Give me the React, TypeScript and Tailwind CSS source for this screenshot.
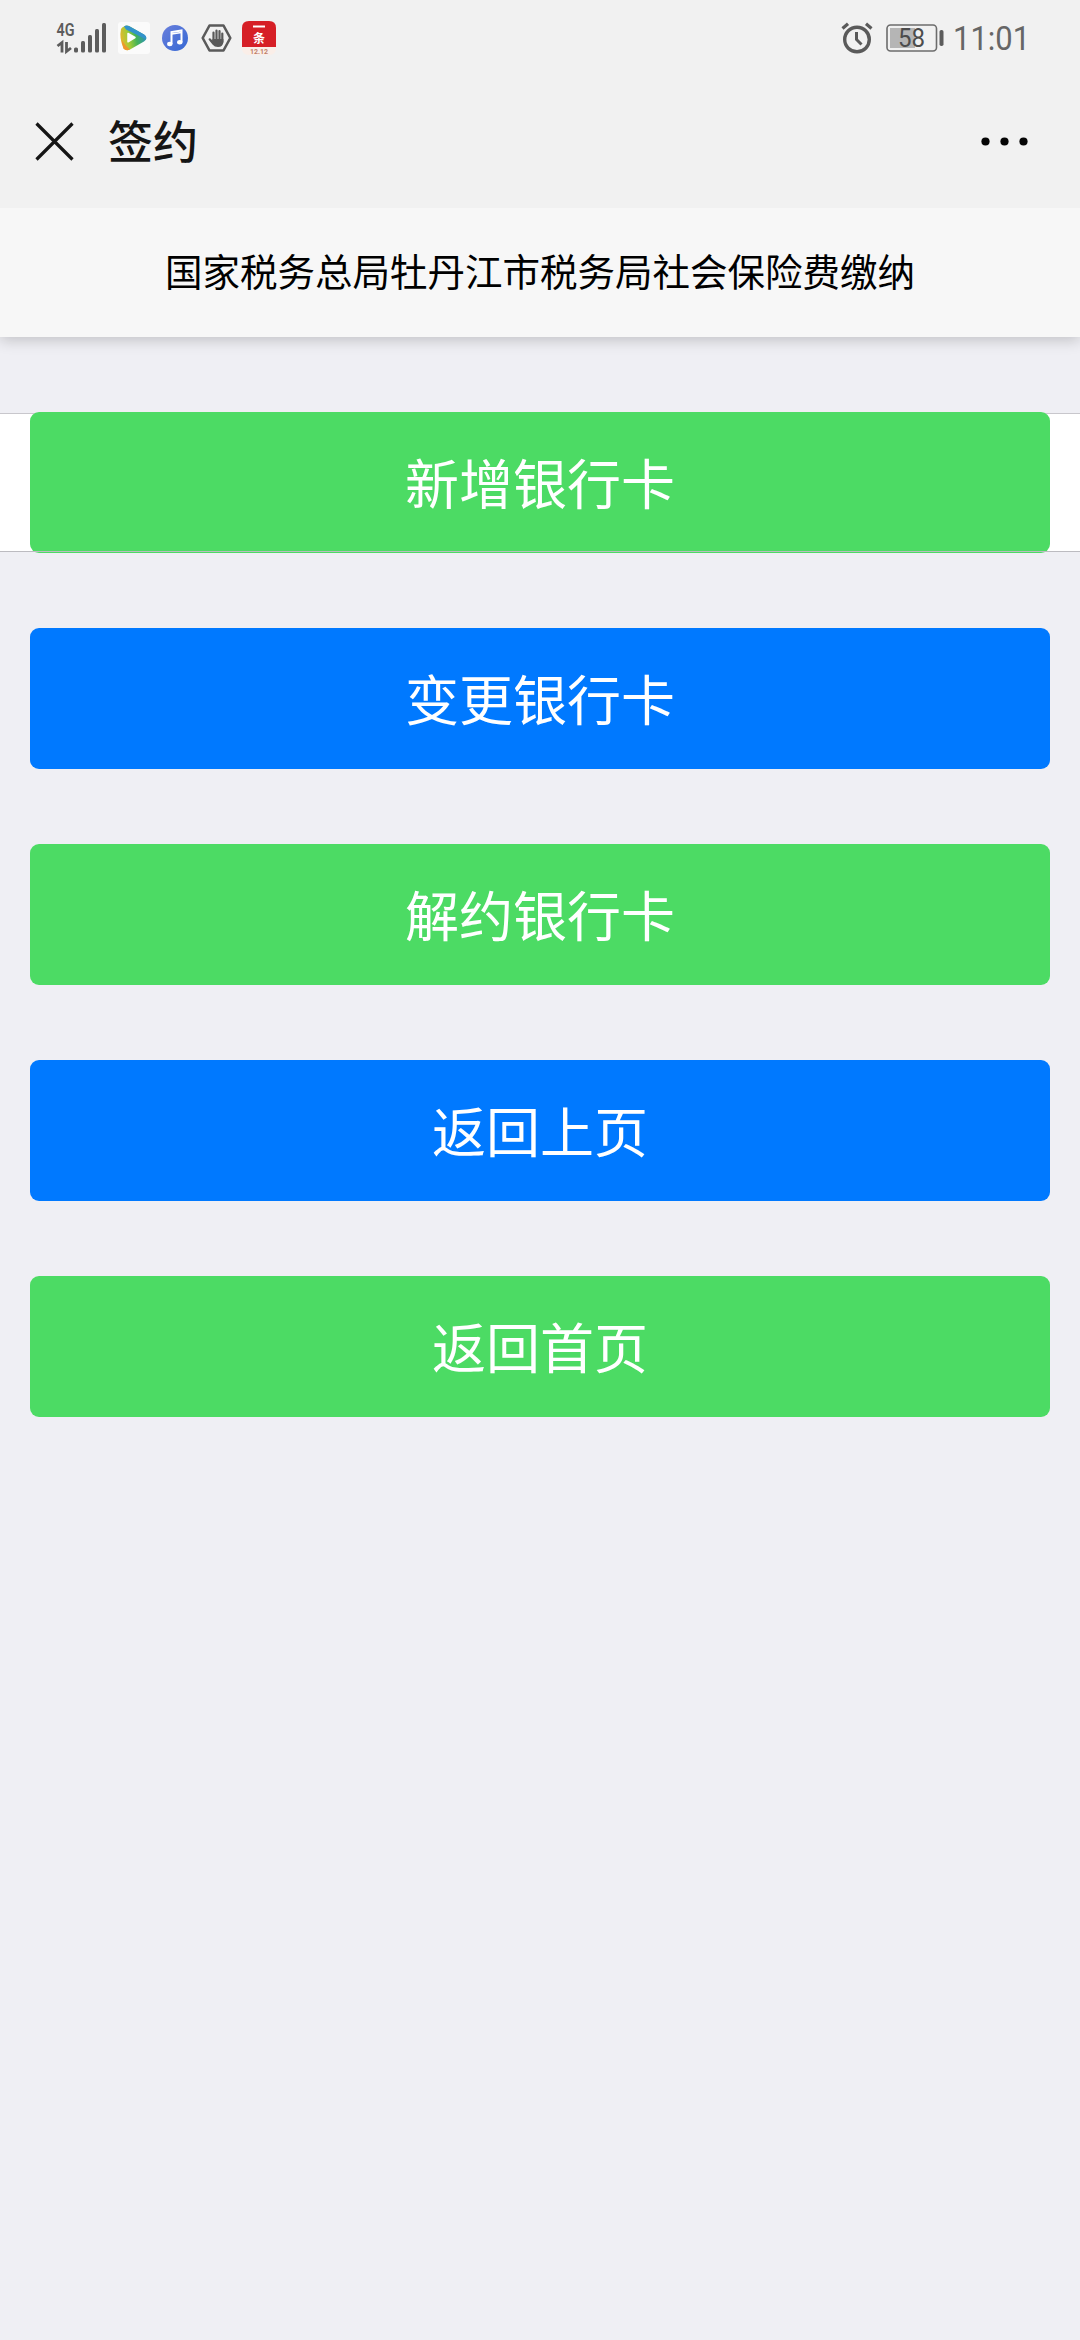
import clsx from "clsx";

type ActionData = {
  label: string;
  color: "green" | "blue";
};

const actions: ActionData[] = [
  { label: "变更银行卡", color: "blue" },
  { label: "解约银行卡", color: "green" },
  { label: "返回上页", color: "blue" },
  { label: "返回首页", color: "green" },
];

function SignalIcon() {
  return (
    <svg width="52" height="34" viewBox="0 0 52 34" fill="#5c5c5c" className="overflow-visible">
      <text
        x="0.5"
        y="14.5"
        fontSize="19"
        fontWeight="600"
        textLength="18"
        lengthAdjust="spacingAndGlyphs"
        fontFamily="Roboto, sans-serif"
      >
        4G
      </text>
      <path d="M1.500 25 L6 21.500 V31.500 M10.500 21 V30.500 L15 27" fill="none" stroke="#5c5c5c" strokeWidth="2.8" />
      <rect x="18" y="26.500" width="4" height="5" rx="1.500" />
      <rect x="25" y="20" width="4" height="11.500" rx="1.500" />
      <rect x="32" y="14" width="4" height="17.500" rx="1.500" />
      <rect x="39" y="8" width="4" height="23.500" rx="1.500" />
      <rect x="46" y="2" width="4" height="29.500" rx="1.500" />
    </svg>
  );
}

function VideoIcon() {
  return (
    <svg width="32" height="32" viewBox="0 0 32 32">
      <defs>
        <linearGradient id="video" x1="0" y1="0.600" x2="1" y2="0.400">
          <stop offset="0" stopColor="#e9b52c" />
          <stop offset="0.3" stopColor="#a5cc35" />
          <stop offset="0.6" stopColor="#45b357" />
          <stop offset="1" stopColor="#2b8fc0" />
        </linearGradient>
      </defs>
      <rect width="32" height="32" rx="3" fill="#fbfbfb" />
      <path
        d="M6 4.500 Q8 3 11 4 L26 12.500 Q31 16 26 19.500 L12 27.500 Q8 29.500 5.500 26.500 Q1 16 3 7 Q4 5 6 4.500Z"
        fill="url(#video)"
      />
      <path d="M6 4.500 Q8 3 11 4 L26 12.500 Q29 14.500 27.500 17 L8 7.500Z" fill="#3493cc" />
      <path d="M3.500 18 L8 24 L12 27.500 Q8 29.500 5.500 26.500Z" fill="#ef962d" />
      <path d="M10 11.500 L17 15.500 L10 19.800Z" fill="#fff" stroke="#fff" strokeWidth="1.500" strokeLinejoin="round" />
    </svg>
  );
}

function MusicIcon() {
  return (
    <svg width="26" height="28" viewBox="0 0 26 28">
      <defs>
        <linearGradient id="music" x1="0" y1="0" x2="1" y2="1">
          <stop offset="0" stopColor="#6a7fdc" />
          <stop offset="1" stopColor="#3568d4" />
        </linearGradient>
      </defs>
      <circle cx="13" cy="14" r="13" fill="url(#music)" />
      <path d="M9.500 20 V8 L19.500 6.500 V18" fill="none" stroke="#fff" strokeWidth="2" />
      <path d="M9.500 10 L19.500 8.500" stroke="#fff" strokeWidth="1.600" />
      <ellipse cx="7.800" cy="20" rx="2.700" ry="2.200" fill="#fff" />
      <ellipse cx="17.800" cy="18.200" rx="2.700" ry="2.200" fill="#fff" />
    </svg>
  );
}

function HandIcon() {
  return (
    <svg width="31" height="28" viewBox="0 0 31 28">
      <path
        d="M8.500 1.500 H22.500 L29.300 14 L22.500 26.500 H8.500 L1.700 14Z"
        fill="none"
        stroke="#5a5a5a"
        strokeWidth="2.600"
        strokeLinejoin="round"
      />
      <path
        d="M12.500 8.500 V17 M15.500 6.500 V17 M18.500 7 V17 M21.300 9.500 V18"
        stroke="#5a5a5a"
        strokeWidth="2.200"
        strokeLinecap="round"
      />
      <path d="M11.400 15 H22.400 V18 Q22 23 17 23 Q13.500 23 11.500 20.500 L7.500 15.500 Q8 13.500 9.500 14.500 L11.400 16.500Z" fill="#5a5a5a" />
    </svg>
  );
}

function NewsIcon() {
  return (
    <svg width="34" height="34" viewBox="0 0 34 34">
      <path d="M0 26 V7 Q0 0 7 0 H27 Q34 0 34 7 V26Z" fill="#d61f26" />
      <path d="M0 26 H34 V27 Q34 34 27 34 H7 Q0 34 0 27Z" fill="#faeee8" />
      <path d="M11 5.500 H23" stroke="#fff" strokeWidth="2" />
      <text x="17" y="21.500" fontSize="12" fontWeight="700" textAnchor="middle" fill="#fff" fontFamily="'Noto Sans CJK SC', sans-serif">
        条
      </text>
      <text x="17" y="33" fontSize="7" fontWeight="700" textAnchor="middle" fill="#c08068" fontFamily="Roboto, sans-serif">
        12.12
      </text>
    </svg>
  );
}

function AlarmIcon() {
  return (
    <svg width="32" height="32" viewBox="0 0 32 32" fill="none" stroke="#5a5a5a">
      <circle cx="16" cy="17.500" r="12.300" strokeWidth="3.400" />
      <path d="M15.500 10 V17.500 L20.500 22.500" strokeWidth="3" />
      <path d="M1.500 6.500 L7 1.800 M30.500 6.500 L25 1.800" strokeWidth="3.200" />
    </svg>
  );
}

function BatteryIcon() {
  return (
    <svg width="58" height="28" viewBox="0 0 58 28" className="overflow-visible">
      <rect x="1" y="1" width="49.500" height="26" rx="3.500" fill="none" stroke="#6c6c6c" strokeWidth="1.600" />
      <rect x="4" y="4" width="25" height="20" fill="#b5b5b5" />
      <rect x="53.500" y="6" width="4" height="16" rx="1.800" fill="#5c5c5c" />
      <text
        x="12"
        y="22.500"
        fontSize="25"
        textLength="27"
        lengthAdjust="spacingAndGlyphs"
        fill="#4c4c4c"
        fontFamily="Roboto, sans-serif"
      >
        58
      </text>
    </svg>
  );
}

function StatusBar() {
  return (
    <div className="flex h-[74px] items-center justify-between pt-px pr-[47px] pl-14">
      <div className="flex items-center">
        <SignalIcon />
        <div className="ml-[10px]">
          <VideoIcon />
        </div>
        <div className="ml-3">
          <MusicIcon />
        </div>
        <div className="ml-[13px]">
          <HandIcon />
        </div>
        <div className="ml-[10px]">
          <NewsIcon />
        </div>
      </div>
      <div className="flex items-center">
        <AlarmIcon />
        <div className="ml-[13px]">
          <BatteryIcon />
        </div>
        <div className="ml-[9px] w-[80px] origin-left scale-x-[0.91] text-[34px] leading-[40px] whitespace-nowrap text-[#666] font-[Roboto,sans-serif]">
          11:01
        </div>
      </div>
    </div>
  );
}

function TitleBar() {
  return (
    <div className="flex h-[134px] items-center justify-between pr-[52px] pl-[35px]">
      <div className="flex items-center">
        <svg width="39" height="39" viewBox="0 0 39 39" stroke="#151515" strokeWidth="3.200">
          <path d="M1.500 1.500 L37.500 37.500 M37.500 1.500 L1.500 37.500" />
        </svg>
        <h1 className="ml-[34px] pb-[3px] text-[45px] leading-[60px] font-medium text-[#151515]">签约</h1>
      </div>
      <svg width="47" height="9" viewBox="0 0 47 9" fill="#050505">
        <circle cx="4.500" cy="4.500" r="4.100" />
        <circle cx="23.500" cy="4.500" r="4.100" />
        <circle cx="42.500" cy="4.500" r="4.100" />
      </svg>
    </div>
  );
}

function ActionButton({ label, color }: ActionData) {
  return (
    <button
      className={clsx(
        "h-[141px] w-full rounded-[9px] pb-px text-[54px] leading-none text-white",
        color === "green" ? "bg-[#4cdb64]" : "bg-[#0079ff]",
      )}
    >
      {label}
    </button>
  );
}

export default function App() {
  return (
    <div className="flex h-[2340px] w-[1080px] flex-col bg-[#efeff4] font-['Noto_Sans_CJK_SC',sans-serif]">
      <div className="relative z-10 bg-[#f1f1f1]">
        <StatusBar />
        <TitleBar />
      </div>
      <header className="flex h-[129px] items-center justify-center bg-[#f7f7f7] pb-[4px] text-[37.5px] text-black shadow-[0_3px_14px_rgba(0,0,0,0.2)]">
        国家税务总局牡丹江市税务局社会保险费缴纳
      </header>
      <main className="flex flex-col gap-[75px] pt-[75px]">
        <div className="relative bg-[linear-gradient(to_bottom,transparent_1px,#c8c7cc_1px,#c8c7cc_2px,#fff_2px,#fff_139px,transparent_139px)] px-[30px]">
          <ActionButton label="新增银行卡" color="green" />
          <div className="absolute inset-x-0 bottom-px h-px bg-[#bcbbc0]" />
        </div>
        {actions.map((action) => (
          <div key={action.label} className="px-[30px]">
            <ActionButton {...action} />
          </div>
        ))}
      </main>
    </div>
  );
}
